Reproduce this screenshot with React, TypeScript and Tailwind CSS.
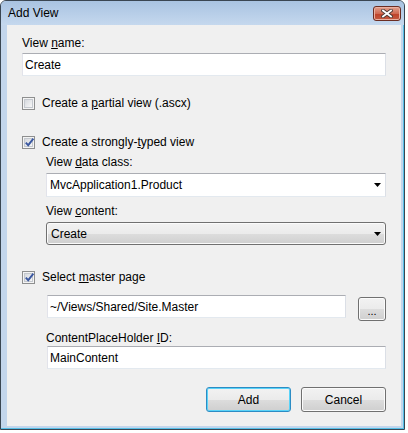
import React from "react";

const font = "font-['Liberation_Sans',Arial,sans-serif]";

function CheckBox({ checked }: { checked?: boolean }) {
  return (
    <span className="flex h-[13px] w-[13px] shrink-0 items-center justify-center border border-[#8e8f8f] bg-[#f4f4f4]">
      <span className="relative flex h-[9px] w-[9px] items-center justify-center border border-[#c4c8ce] bg-[linear-gradient(135deg,#d6d9de,#f7f7f7)]">
        {checked && (
          <svg
            width="11"
            height="11"
            viewBox="0 0 11 11"
            className="absolute -left-[1px] -top-[2px]"
          >
            <path
              d="M1.8 5.6 L4.2 8.2 L9.4 1.6"
              fill="none"
              stroke="#3b58a0"
              strokeWidth="1.9"
            />
          </svg>
        )}
      </span>
    </span>
  );
}

function Label({ children, className = "" }: { children: React.ReactNode; className?: string }) {
  return <div className={`h-4 leading-4 text-[12px] text-black ${className}`}>{children}</div>;
}

function TextBox({ value, className = "" }: { value: string; className?: string }) {
  return (
    <div
      className={`flex h-[23px] items-center border border-[#abadb3] border-b-[#e3e9ef] border-l-[#e2e3ea] border-r-[#dbdfe6] bg-white pl-[2px] text-[12px] text-black ${className}`}
    >
      {value}
    </div>
  );
}

function Arrow() {
  return (
    <svg width="7" height="4" viewBox="0 0 7 4">
      <polygon points="0,0 7,0 3.5,4" fill="#000" />
    </svg>
  );
}

const btnBg =
  "bg-[linear-gradient(#f2f2f2_0%,#ebebeb_50%,#dddddd_50%,#cfcfcf_100%)]";

function Button({
  children,
  focused,
  className = "",
}: {
  children: React.ReactNode;
  focused?: boolean;
  className?: string;
}) {
  return (
    <div
      className={`flex items-center justify-center rounded-[3px] border text-[12px] text-black ${btnBg} ${
        focused
          ? "border-[#2c8cc4] shadow-[inset_0_0_0_1px_#5ad3f8]"
          : "border-[#707070] shadow-[inset_0_0_0_1px_#fbfbfb]"
      } ${className}`}
    >
      {children}
    </div>
  );
}

export default function App() {
  return (
    <div className={`h-[433px] w-[408px] bg-white ${font}`}>
      <div className="flex h-[430px] w-[405px] flex-col rounded-t-[6px] border border-[#3a4652] bg-[#c3d6ec] shadow-[inset_-1px_-1px_0_#56bfe8]">
        {/* title bar */}
        <div className="flex h-[24px] items-center justify-between rounded-t-[5px] bg-[linear-gradient(#a9c3e1,#c5d8ee)] pl-[7px] pr-[3px]">
          <span className="text-[12px] text-black">Add View</span>
          <div className="flex h-[15px] w-[28px] items-center justify-center rounded-[3px] border border-[#6b2d22] bg-[linear-gradient(#e2a18f_0%,#d06a52_50%,#c0432a_55%,#c25a41_100%)] shadow-[inset_0_0_0_1px_#eab1a2]">
            <svg width="12" height="9" viewBox="0 0 12 9">
              <path d="M2 1.5 L10 7.5 M10 1.5 L2 7.5" stroke="#4a3a36" strokeWidth="3.6" strokeLinecap="square" />
              <path d="M2 1.5 L10 7.5 M10 1.5 L2 7.5" stroke="#ffffff" strokeWidth="1.8" strokeLinecap="square" />
            </svg>
          </div>
        </div>

        {/* client */}
        <div className="ml-[6px] mr-[3px] flex h-[401px] flex-col bg-[#f0f0f0] px-[15px] pt-[10px]">
          <Label>
            View <u>n</u>ame:
          </Label>
          <TextBox value="Create" className="mt-[2px]" />

          <div className="mt-[19px] flex h-4 items-center gap-[7px]">
            <CheckBox />
            <Label>
              Create a <u>p</u>artial view (.ascx)
            </Label>
          </div>

          <div className="mt-[23px] flex h-4 items-center gap-[7px]">
            <CheckBox checked />
            <Label>
              Create a strongly-<u>t</u>yped view
            </Label>
          </div>

          <div className="ml-[24px] flex flex-col">
            <Label className="mt-[4px]">
              View <u>d</u>ata class:
            </Label>
            <div className="mt-[3px] flex h-[24px] items-center justify-between border border-[#abadb3] border-b-[#e3e9ef] border-l-[#e2e3ea] border-r-[#dbdfe6] bg-white pl-[3px] pr-[4px] text-[12px] text-black">
              <span>MvcApplication1.Product</span>
              <Arrow />
            </div>

            <Label className="mt-[6px]">
              View <u>c</u>ontent:
            </Label>
            <Button className="mt-[3px] h-[23px] !justify-between pl-[4px] pr-[4px]">
              <span>Create</span>
              <Arrow />
            </Button>
          </div>

          <div className="mt-[24px] flex h-4 items-center gap-[7px]">
            <CheckBox checked />
            <Label>
              Select <u>m</u>aster page
            </Label>
          </div>

          <div className="ml-[25px] flex flex-col">
            <div className="mt-[10px] flex items-start gap-[12px]">
              <TextBox value="~/Views/Shared/Site.Master" className="flex-1" />
              <Button className="mt-[2px] h-[24px] w-[28px] pt-[4px]">
                <span className="text-[11px]">...</span>
              </Button>
            </div>
            <Label className="-ml-[1px] mt-[9px]">
              ContentPlaceHolder <u>I</u>D:
            </Label>
            <TextBox value="MainContent" />
          </div>

          <div className="mt-[18px] flex justify-end gap-[10px]">
            <Button focused className="h-[25px] w-[85px]">
              Add
            </Button>
            <Button className="h-[25px] w-[85px]">Cancel</Button>
          </div>
        </div>
      </div>
    </div>
  );
}
